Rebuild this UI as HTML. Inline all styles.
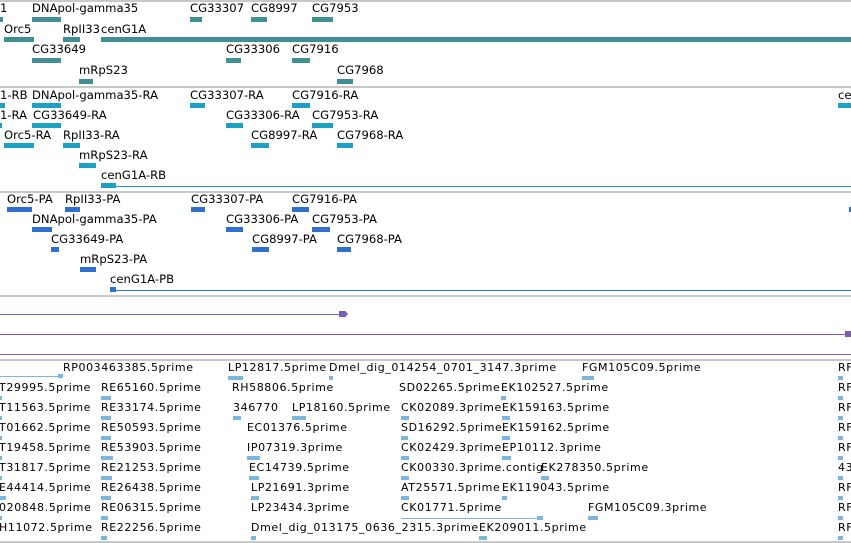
<!DOCTYPE html>
<html><head><meta charset="utf-8"><style>
body{margin:0;width:851px;height:543px;overflow:hidden;background:#fff;position:relative;font-family:"DejaVu Sans","Liberation Sans",sans-serif;font-size:11.6px;color:#000}
div{position:absolute}
.t{line-height:13px;white-space:nowrap}
.s{height:2px;left:0;width:851px;background:#c8c8c8}
.a{height:5px;background:#3f8f93}
.b{height:5px;background:#1ca0c3}
.c{height:5px;background:#2f6fd0}
.d{height:4px;background:#7ab6de}
.e .t{letter-spacing:0.6px;font-size:11px}
</style></head><body>
<div class="s" style="top:0"></div>
<!-- section 1 -->
<div class="t" style="left:0;top:2px">1</div><div class="a" style="left:0;top:17px;width:3px"></div>
<div class="t" style="left:32px;top:2px">DNApol-gamma35</div><div class="a" style="left:32px;top:17px;width:29px"></div>
<div class="t" style="left:190px;top:2px">CG33307</div><div class="a" style="left:190px;top:17px;width:12px"></div>
<div class="t" style="left:251px;top:2px">CG8997</div><div class="a" style="left:251px;top:17px;width:16px"></div>
<div class="t" style="left:312px;top:2px">CG7953</div><div class="a" style="left:312px;top:17px;width:21px"></div>
<div class="t" style="left:4px;top:23px">Orc5</div><div class="a" style="left:4px;top:37px;width:30px"></div>
<div class="t" style="left:63px;top:23px">RpII33</div><div class="a" style="left:63px;top:37px;width:17px"></div>
<div class="t" style="left:101px;top:23px">cenG1A</div><div class="a" style="left:101px;top:37px;width:750px"></div>
<div class="t" style="left:32px;top:43px">CG33649</div><div class="a" style="left:32px;top:58px;width:29px"></div>
<div class="t" style="left:226px;top:43px">CG33306</div><div class="a" style="left:226px;top:58px;width:15px"></div>
<div class="t" style="left:292px;top:43px">CG7916</div><div class="a" style="left:292px;top:58px;width:18px"></div>
<div class="t" style="left:79px;top:64px">mRpS23</div><div class="a" style="left:79px;top:79px;width:14px"></div>
<div class="t" style="left:337px;top:64px">CG7968</div><div class="a" style="left:337px;top:79px;width:16px"></div>
<div class="s" style="top:86px"></div>
<!-- section 2 -->
<div class="t" style="left:0;top:89px">1-RB</div><div class="b" style="left:0;top:103px;width:5px"></div>
<div class="t" style="left:32px;top:89px">DNApol-gamma35-RA</div><div class="b" style="left:32px;top:103px;width:29px"></div>
<div class="t" style="left:190px;top:89px">CG33307-RA</div><div class="b" style="left:190px;top:103px;width:15px"></div>
<div class="t" style="left:292px;top:89px">CG7916-RA</div><div class="b" style="left:292px;top:103px;width:18px"></div>
<div class="t" style="left:838px;top:89px">cen</div><div class="b" style="left:838px;top:103px;width:13px"></div>
<div class="t" style="left:0;top:109px">1-RA</div><div class="b" style="left:0;top:123px;width:2px"></div>
<div class="t" style="left:33px;top:109px">CG33649-RA</div><div class="b" style="left:32px;top:123px;width:29px"></div>
<div class="t" style="left:226px;top:109px">CG33306-RA</div><div class="b" style="left:226px;top:123px;width:17px"></div>
<div class="t" style="left:312px;top:109px">CG7953-RA</div><div class="b" style="left:312px;top:123px;width:21px"></div>
<div class="t" style="left:4px;top:129px">Orc5-RA</div><div class="b" style="left:4px;top:143px;width:30px"></div>
<div class="t" style="left:63px;top:129px">RpII33-RA</div><div class="b" style="left:63px;top:143px;width:17px"></div>
<div class="t" style="left:251px;top:129px">CG8997-RA</div><div class="b" style="left:251px;top:143px;width:18px"></div>
<div class="t" style="left:337px;top:129px">CG7968-RA</div><div class="b" style="left:337px;top:143px;width:16px"></div>
<div class="t" style="left:79px;top:149px">mRpS23-RA</div><div class="b" style="left:79px;top:163px;width:17px"></div>
<div class="t" style="left:101px;top:169px">cenG1A-RB</div><div class="b" style="left:101px;top:183px;width:15px"></div>
<div style="left:101px;top:186px;width:750px;height:1px;background:#1ca0c3"></div>
<div class="s" style="top:191px"></div>
<!-- section 3 -->
<div class="t" style="left:7px;top:193px">Orc5-PA</div><div class="c" style="left:7px;top:207px;width:25px"></div>
<div class="t" style="left:65px;top:193px">RpII33-PA</div><div class="c" style="left:65px;top:207px;width:15px"></div>
<div class="t" style="left:191px;top:193px">CG33307-PA</div><div class="c" style="left:191px;top:207px;width:14px"></div>
<div class="t" style="left:292px;top:193px">CG7916-PA</div><div class="c" style="left:292px;top:207px;width:17px"></div>
<div class="c" style="left:849px;top:207px;width:2px"></div>
<div class="t" style="left:32px;top:213px">DNApol-gamma35-PA</div><div class="c" style="left:32px;top:227px;width:20px"></div>
<div class="t" style="left:226px;top:213px">CG33306-PA</div><div class="c" style="left:226px;top:227px;width:17px"></div>
<div class="t" style="left:312px;top:213px">CG7953-PA</div><div class="c" style="left:312px;top:227px;width:18px"></div>
<div class="t" style="left:51px;top:233px">CG33649-PA</div><div class="c" style="left:51px;top:247px;width:8px"></div>
<div class="t" style="left:252px;top:233px">CG8997-PA</div><div class="c" style="left:252px;top:247px;width:17px"></div>
<div class="t" style="left:337px;top:233px">CG7968-PA</div><div class="c" style="left:337px;top:247px;width:14px"></div>
<div class="t" style="left:80px;top:253px">mRpS23-PA</div><div class="c" style="left:80px;top:267px;width:16px"></div>
<div class="t" style="left:110px;top:273px">cenG1A-PB</div><div class="c" style="left:110px;top:287px;width:6px"></div>
<div style="left:110px;top:290px;width:741px;height:1px;background:#2f6fd0"></div>
<div class="s" style="top:295px"></div>
<!-- section 4 -->
<div style="left:0;top:314px;width:345px;height:1px;background:#7a5cb0"></div>
<div style="left:339px;top:311px;width:9px;height:6px;background:#7a5cb0;clip-path:polygon(0 0,70% 0,100% 50%,70% 100%,0 100%)"></div>
<div style="left:0;top:334px;width:851px;height:1px;background:#7a5cb0"></div>
<div style="left:845px;top:331px;width:6px;height:6px;background:#7a5cb0"></div>
<div style="left:0;top:354px;width:851px;height:1px;background:#7a5cb0"></div>
<div class="s" style="top:359px"></div>
<!-- section 5 -->
<div class="e">
<div style="left:0;top:376px;width:60px;height:1px;background:#7ab6de"></div><div class="d" style="left:58px;top:374px;width:5px"></div>
<div class="t" style="left:63px;top:361px">RP003463385.5prime</div>
<div class="t" style="left:228px;top:361px">LP12817.5prime</div><div class="d" style="left:228px;top:376px;width:15px"></div>
<div class="t" style="left:329px;top:361px">Dmel_dig_014254_0701_3147.3prime</div><div class="d" style="left:329px;top:376px;width:4px"></div>
<div class="t" style="left:582px;top:361px">FGM105C09.5prime</div><div class="d" style="left:582px;top:376px;width:12px"></div>
<div class="t" style="left:838px;top:361px">RF</div><div class="d" style="left:838px;top:376px;width:5px"></div>

<div class="t" style="left:-1px;top:381px">T29995.5prime</div><div class="d" style="left:0;top:396px;width:2px"></div>
<div class="t" style="left:101px;top:381px">RE65160.5prime</div><div class="d" style="left:101px;top:396px;width:10px"></div>
<div class="t" style="left:232px;top:381px">RH58806.5prime</div>
<div class="t" style="left:399px;top:381px">SD02265.5prime</div>
<div class="t" style="left:501px;top:381px">EK102527.5prime</div>
<div class="t" style="left:838px;top:381px">RF</div><div class="d" style="left:838px;top:396px;width:5px"></div>

<div class="t" style="left:-1px;top:401px">T11563.5prime</div><div class="d" style="left:0;top:416px;width:2px"></div>
<div class="t" style="left:101px;top:401px">RE33174.5prime</div><div class="d" style="left:101px;top:416px;width:10px"></div>
<div class="t" style="left:233px;top:401px">346770</div><div class="d" style="left:233px;top:416px;width:8px"></div>
<div class="t" style="left:292px;top:401px">LP18160.5prime</div><div class="d" style="left:292px;top:416px;width:14px"></div>
<div class="t" style="left:401px;top:401px">CK02089.3prime</div><div class="d" style="left:401px;top:416px;width:8px"></div>
<div class="t" style="left:502px;top:401px">EK159163.5prime</div><div class="d" style="left:501px;top:396px;width:5px"></div>
<div class="t" style="left:838px;top:401px">RF</div><div class="d" style="left:838px;top:416px;width:5px"></div>

<div class="t" style="left:-1px;top:421px">T01662.5prime</div><div class="d" style="left:0;top:436px;width:2px"></div>
<div class="t" style="left:101px;top:421px">RE50593.5prime</div><div class="d" style="left:101px;top:436px;width:10px"></div>
<div class="t" style="left:247px;top:421px">EC01376.5prime</div>
<div class="t" style="left:401px;top:421px">SD16292.5prime</div><div class="d" style="left:401px;top:436px;width:7px"></div>
<div class="t" style="left:502px;top:421px">EK159162.5prime</div><div class="d" style="left:502px;top:416px;width:8px"></div>
<div class="t" style="left:838px;top:421px">RF</div><div class="d" style="left:838px;top:436px;width:5px"></div>

<div class="t" style="left:-1px;top:441px">T19458.5prime</div><div class="d" style="left:0;top:456px;width:2px"></div>
<div class="t" style="left:101px;top:441px">RE53903.5prime</div><div class="d" style="left:101px;top:456px;width:12px"></div>
<div class="t" style="left:247px;top:441px">IP07319.3prime</div><div class="d" style="left:247px;top:456px;width:13px"></div>
<div class="t" style="left:401px;top:441px">CK02429.3prime</div><div class="d" style="left:401px;top:456px;width:8px"></div>
<div class="t" style="left:502px;top:441px">EP10112.3prime</div><div class="d" style="left:502px;top:436px;width:8px"></div>
<div class="t" style="left:838px;top:441px">RF</div><div class="d" style="left:838px;top:456px;width:5px"></div>

<div class="t" style="left:-1px;top:461px">T31817.5prime</div><div class="d" style="left:0;top:476px;width:2px"></div>
<div class="t" style="left:101px;top:461px">RE21253.5prime</div><div class="d" style="left:101px;top:476px;width:11px"></div>
<div class="t" style="left:249px;top:461px">EC14739.5prime</div><div class="d" style="left:249px;top:476px;width:10px"></div>
<div class="t" style="left:401px;top:461px">CK00330.3prime.contig</div><div class="d" style="left:401px;top:476px;width:8px"></div>
<div class="t" style="left:541px;top:461px">EK278350.5prime</div><div class="d" style="left:502px;top:456px;width:9px"></div>
<div class="t" style="left:838px;top:461px">43</div><div class="d" style="left:838px;top:476px;width:5px"></div>

<div class="t" style="left:-1px;top:481px">E44414.5prime</div><div class="d" style="left:0;top:496px;width:6px"></div>
<div class="t" style="left:101px;top:481px">RE26438.5prime</div><div class="d" style="left:101px;top:496px;width:10px"></div>
<div class="t" style="left:251px;top:481px">LP21691.3prime</div><div class="d" style="left:251px;top:496px;width:8px"></div>
<div class="t" style="left:401px;top:481px">AT25571.5prime</div><div class="d" style="left:401px;top:496px;width:8px"></div>
<div class="t" style="left:502px;top:481px">EK119043.5prime</div><div class="d" style="left:541px;top:476px;width:8px"></div>
<div class="t" style="left:838px;top:481px">RF</div><div class="d" style="left:838px;top:496px;width:5px"></div>

<div class="t" style="left:-1px;top:501px">020848.5prime</div><div class="d" style="left:0;top:516px;width:2px"></div>
<div class="t" style="left:101px;top:501px">RE06315.5prime</div><div class="d" style="left:101px;top:516px;width:7px"></div>
<div class="t" style="left:251px;top:501px">LP23434.3prime</div>
<div class="t" style="left:401px;top:501px">CK01771.5prime</div><div style="left:401px;top:518px;width:140px;height:1px;background:#7ab6de"></div><div class="d" style="left:537px;top:516px;width:6px"></div>
<div class="t" style="left:588px;top:501px">FGM105C09.3prime</div><div class="d" style="left:588px;top:516px;width:10px"></div>
<div class="d" style="left:502px;top:496px;width:5px"></div>
<div class="t" style="left:838px;top:501px">RF</div><div class="d" style="left:838px;top:516px;width:5px"></div>

<div class="t" style="left:-1px;top:521px">H11072.5prime</div>
<div class="t" style="left:101px;top:521px">RE22256.5prime</div><div class="d" style="left:101px;top:536px;width:6px"></div>
<div class="t" style="left:251px;top:521px">Dmel_dig_013175_0636_2315.3prime</div><div class="d" style="left:251px;top:536px;width:5px"></div>
<div class="t" style="left:479px;top:521px">EK209011.5prime</div><div class="d" style="left:479px;top:536px;width:8px"></div>
<div class="t" style="left:838px;top:521px">RF</div><div class="d" style="left:838px;top:536px;width:5px"></div>
</div>
<div class="s" style="top:541px"></div>
</body></html>
